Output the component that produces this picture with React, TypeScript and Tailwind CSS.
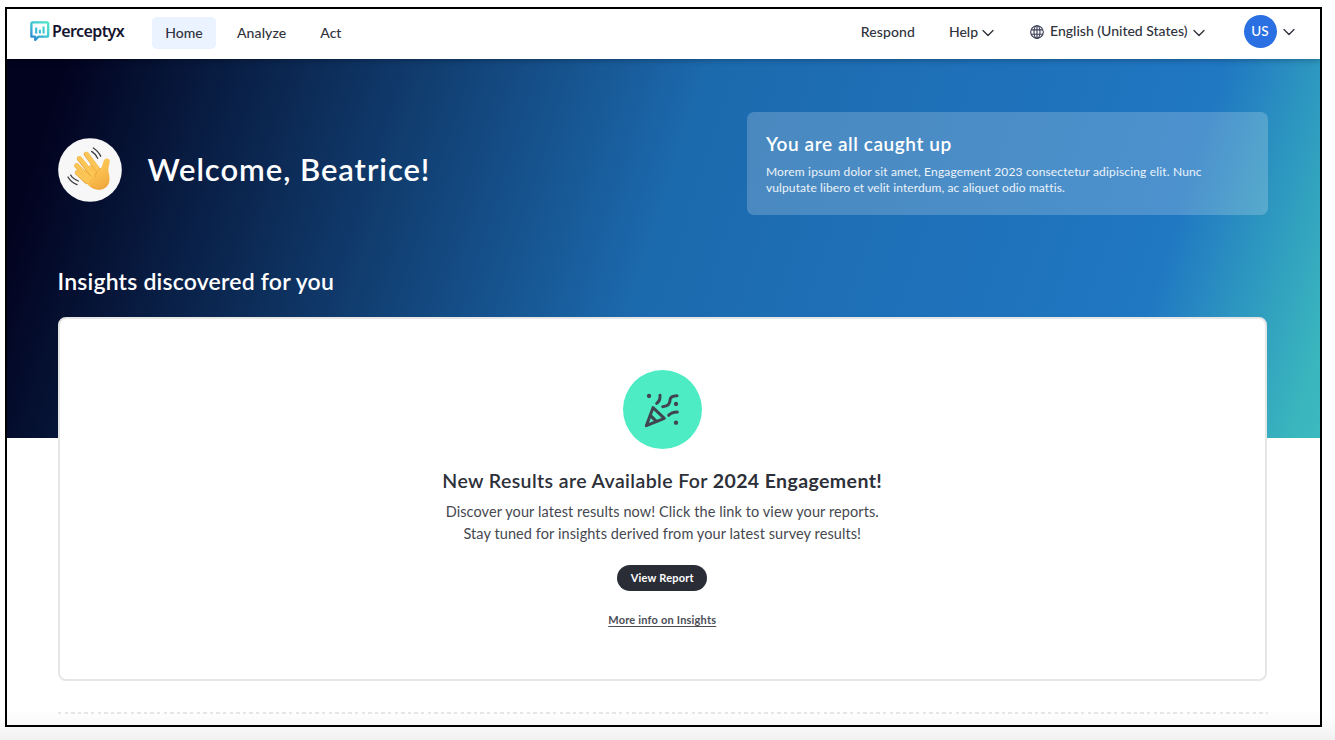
import React from 'react';
import { ChevronDown } from 'lucide-react';

const LogoMark = () => (
    <svg width="20" height="21" viewBox="0 0 20 21" fill="none">
        <defs>
            <linearGradient id="logo" x1="0" y1="21" x2="20" y2="0" gradientUnits="userSpaceOnUse">
                <stop offset="0.1" stopColor="#2b7fd0" />
                <stop offset="0.5" stopColor="#3cc3d2" />
                <stop offset="1" stopColor="#4fecc4" />
            </linearGradient>
        </defs>
        <path d="M2.8 1.3h14c.8 0 1.4.6 1.4 1.4v11.6c0 .8-.6 1.4-1.4 1.4H8.6L5.2 18.9v-3.2H1.4v-13c0-.8.6-1.4 1.4-1.4z" stroke="url(#logo)" strokeWidth="2.3" strokeLinejoin="round" />
        <path d="M6.2 6.6v5.8M9.9 8.8v3.6M13.6 5.6v6.8" stroke="url(#logo)" strokeWidth="2.1" />
    </svg>
);

const GlobeIcon = () => (
    <svg width="14" height="14" viewBox="0 0 14 14" fill="none" stroke="#3b3f58" strokeWidth="1.15">
        <circle cx="7" cy="7" r="6.3" />
        <ellipse cx="7" cy="7" rx="3" ry="6.3" />
        <path d="M1.2 4.8h11.6M1.2 9.2h11.6M7 .8v12.4" />
    </svg>
);

const WavingHand = () => (
    <svg width="64" height="64" viewBox="0 0 192 192" fill="none" strokeLinecap="round">
        <defs>
            <linearGradient id="skin" x1="60" y1="50" x2="130" y2="160" gradientUnits="userSpaceOnUse">
                <stop offset="0" stopColor="#fccb62" />
                <stop offset="0.6" stopColor="#fbc04f" />
                <stop offset="1" stopColor="#f0a83c" />
            </linearGradient>
        </defs>
        <circle cx="96" cy="96" r="95.5" fill="#f7f7f7" />
        {/* palm and thumb */}
        <path
            d="M72 104 L104 74 L127 92 C132 88 133 80 136 71 C139 59 154 59 155 69 C155 79 151 85 151 97 C153 111 157 120 153 134 C147 153 123 161 104 151 C91 144 80 131 70 118 Z"
            fill="url(#skin)"
        />
        {/* fingers, little one first */}
        <g stroke="#e79f35" strokeWidth="15">
            <path d="M58 104l28 26" />
            <path d="M56 83l36 36" />
            <path d="M64 62l36 44" />
            <path d="M85 49l33 44" />
        </g>
        <g stroke="#fcc657" strokeWidth="13">
            <path d="M58 104l30 26" />
            <path d="M56 83l38 37" />
            <path d="M65 61l37 46" />
            <path d="M86 48l34 47" />
        </g>
        <path d="M127 92c-10 5-15 13-14 25" stroke="#e79f35" strokeWidth="2.5" />
        <path d="M100 145c14 12 38 9 48-8" stroke="#eda33a" strokeWidth="4" opacity="0.6" />
        <g stroke="#3d3d3d" strokeWidth="4">
            <path d="M106 30c9 6 17 13 22 25M101 40c8 5 14 12 18 21" />
            <path d="M38 111c5 9 13 14 23 18M30 117c6 11 15 18 27 23" />
        </g>
    </svg>
);

const ConfettiIcon = () => (
    <svg width="36" height="38" viewBox="135 105 108 114" fill="none" stroke="#414550" strokeWidth="9" strokeLinecap="round" strokeLinejoin="round">
        <path d="M162 155l34 32-54 22z" />
        <path d="M154 178l18 18" />
        <path d="M183 118c1 10-2 18-10 24" />
        <path d="M234 119c-14 0-21 4-21 14 0 11-8 18-22 19" />
        <path d="M209 178c6-7 14-10 26-10" />
        <g fill="#414550" stroke="none">
            <circle cx="150" cy="120" r="6.5" />
            <circle cx="231" cy="144" r="6.5" />
            <circle cx="231" cy="200" r="6.5" />
        </g>
    </svg>
);

const Header = () => (
    <header className="relative z-10 flex h-[50px] shrink-0 items-center bg-white pl-[23px] pr-[21.5px] text-[14px] font-medium text-[#2f323c] shadow-[0_1px_6px_rgba(0,0,0,0.3)]">
        <div className="flex w-[122px] items-start gap-[2px] pb-[5px]">
            <LogoMark />
            <span className="-mt-[1px] font-['Noto_Sans'] text-[16px] leading-[22px] font-semibold tracking-[-0.6px] text-[#15152f]">Perceptyx</span>
        </div>
        <nav className="flex items-center pb-[2px]">
            <a className="flex h-[32px] w-[64px] items-center justify-center rounded-[5px] bg-[#eaf3ff] pb-[2px]">Home</a>
            <a className="ml-[21px] pb-[2px] tracking-[0.1px]">Analyze</a>
            <a className="ml-[34px] pb-[2px]">Act</a>
        </nav>
        <div className="ml-auto flex items-center pb-[5px]">
            <a className="tracking-[0.1px]">Respond</a>
            <a className="ml-[34px] flex items-center">
                Help <ChevronDown size={20} strokeWidth={1.6} className="mt-[2px]" />
            </a>
            <a className="ml-[32px] flex items-center">
                <GlobeIcon />
                <span className="ml-[6px] pb-[2px]">English (United States)</span>
                <ChevronDown size={20} strokeWidth={1.6} className="mt-[2px] ml-px" />
            </a>
            <div className="ml-[35px] flex size-[33px] items-center justify-center rounded-full bg-[#2b70e2] pb-px text-[13.5px] text-white">US</div>
            <ChevronDown size={20} strokeWidth={1.6} className="ml-[2px]" />
        </div>
    </header>
);

export default function App() {
    return (
        <div className="h-[740px] w-[1335px] overflow-hidden bg-[linear-gradient(to_bottom,#fff_715px,#f1f1f1_740px)] pt-[7px] pl-[5px] font-['Lato',sans-serif]">
            <div className="flex h-[720px] w-[1317px] flex-col overflow-hidden border-2 border-black bg-[linear-gradient(to_bottom,#fff_700px,#f9f9f9_716px)]">
                <Header />

                <section className="h-[379px] shrink-0 bg-[linear-gradient(107.5deg,#02031f_4%,#1c6aae_49.5%,#2077c2_85%,#3ab6be_98%,#3cbabf_100%)] pr-[52.5px] pl-[50.5px]">
                    <div className="flex pt-[53px]">
                        <div className="flex h-[103px] items-center pt-[13px]">
                            <WavingHand />
                            <h1 className="ml-[26px] pb-[2px] text-[31px] leading-[40px] font-semibold tracking-[0.95px] text-white">Welcome, Beatrice!</h1>
                        </div>
                        <div className="ml-auto h-[103px] w-[521px] rounded-[7px] bg-white/20 px-[19.5px] pt-[19px] text-white">
                            <h2 className="text-[19px] leading-[26px] font-semibold tracking-[0.58px]">You are all caught up</h2>
                            <p className="mt-[7px] text-[12px] leading-4 tracking-[0.16px] text-white/90">
                                Morem ipsum dolor sit amet, Engagement 2023 consectetur adipiscing elit. Nunc<br />
                                <span className="tracking-[0.1px]">vulputate libero et velit interdum, ac aliquet odio mattis.</span>
                            </p>
                        </div>
                    </div>
                    <h2 className="mt-[51px] text-[23px] leading-[30px] font-semibold tracking-[0.2px] text-white">Insights discovered for you</h2>
                </section>

                <main className="relative z-10 -mt-[121px] pl-[50.5px]">
                    <div className="flex h-[364px] w-[1209.5px] flex-col items-center rounded-lg border-2 border-[#e6e6e6] bg-white pt-[51px] text-[#2d3039]">
                        <div className="flex size-[79px] items-center justify-center rounded-full bg-[#4eecc4]">
                            <ConfettiIcon />
                        </div>
                        <h3 className="mt-[19px] text-[19.5px] leading-[26px] font-semibold tracking-[0.4px] whitespace-nowrap">
                            New Results are Available For <b className="font-bold">2024 Engagement!</b>
                        </h3>
                        <p className="mt-[7px] text-center text-[14.5px] leading-[22px] tracking-[0.09px] text-[#45484f]">
                            Discover your latest results now! Click the link to view your reports.<br />
                            Stay tuned for insights derived from your latest survey results!
                        </p>
                        <button className="mt-[20px] h-[26px] w-[90px] rounded-full bg-[#2a2d36] text-[11px] font-bold tracking-[0.2px] text-white">View Report</button>
                        <a className="mt-[21px] text-[11px] leading-4 font-bold tracking-[0.2px] text-[#4b4e56] underline underline-offset-2">More info on Insights</a>
                    </div>
                    <div className="mt-[31px] h-[2px] w-[1210px] bg-[repeating-linear-gradient(to_right,#e6e6e6_0,#e6e6e6_3.4px,transparent_3.4px,transparent_6.6px)]" />
                </main>
            </div>
        </div>
    );
}
